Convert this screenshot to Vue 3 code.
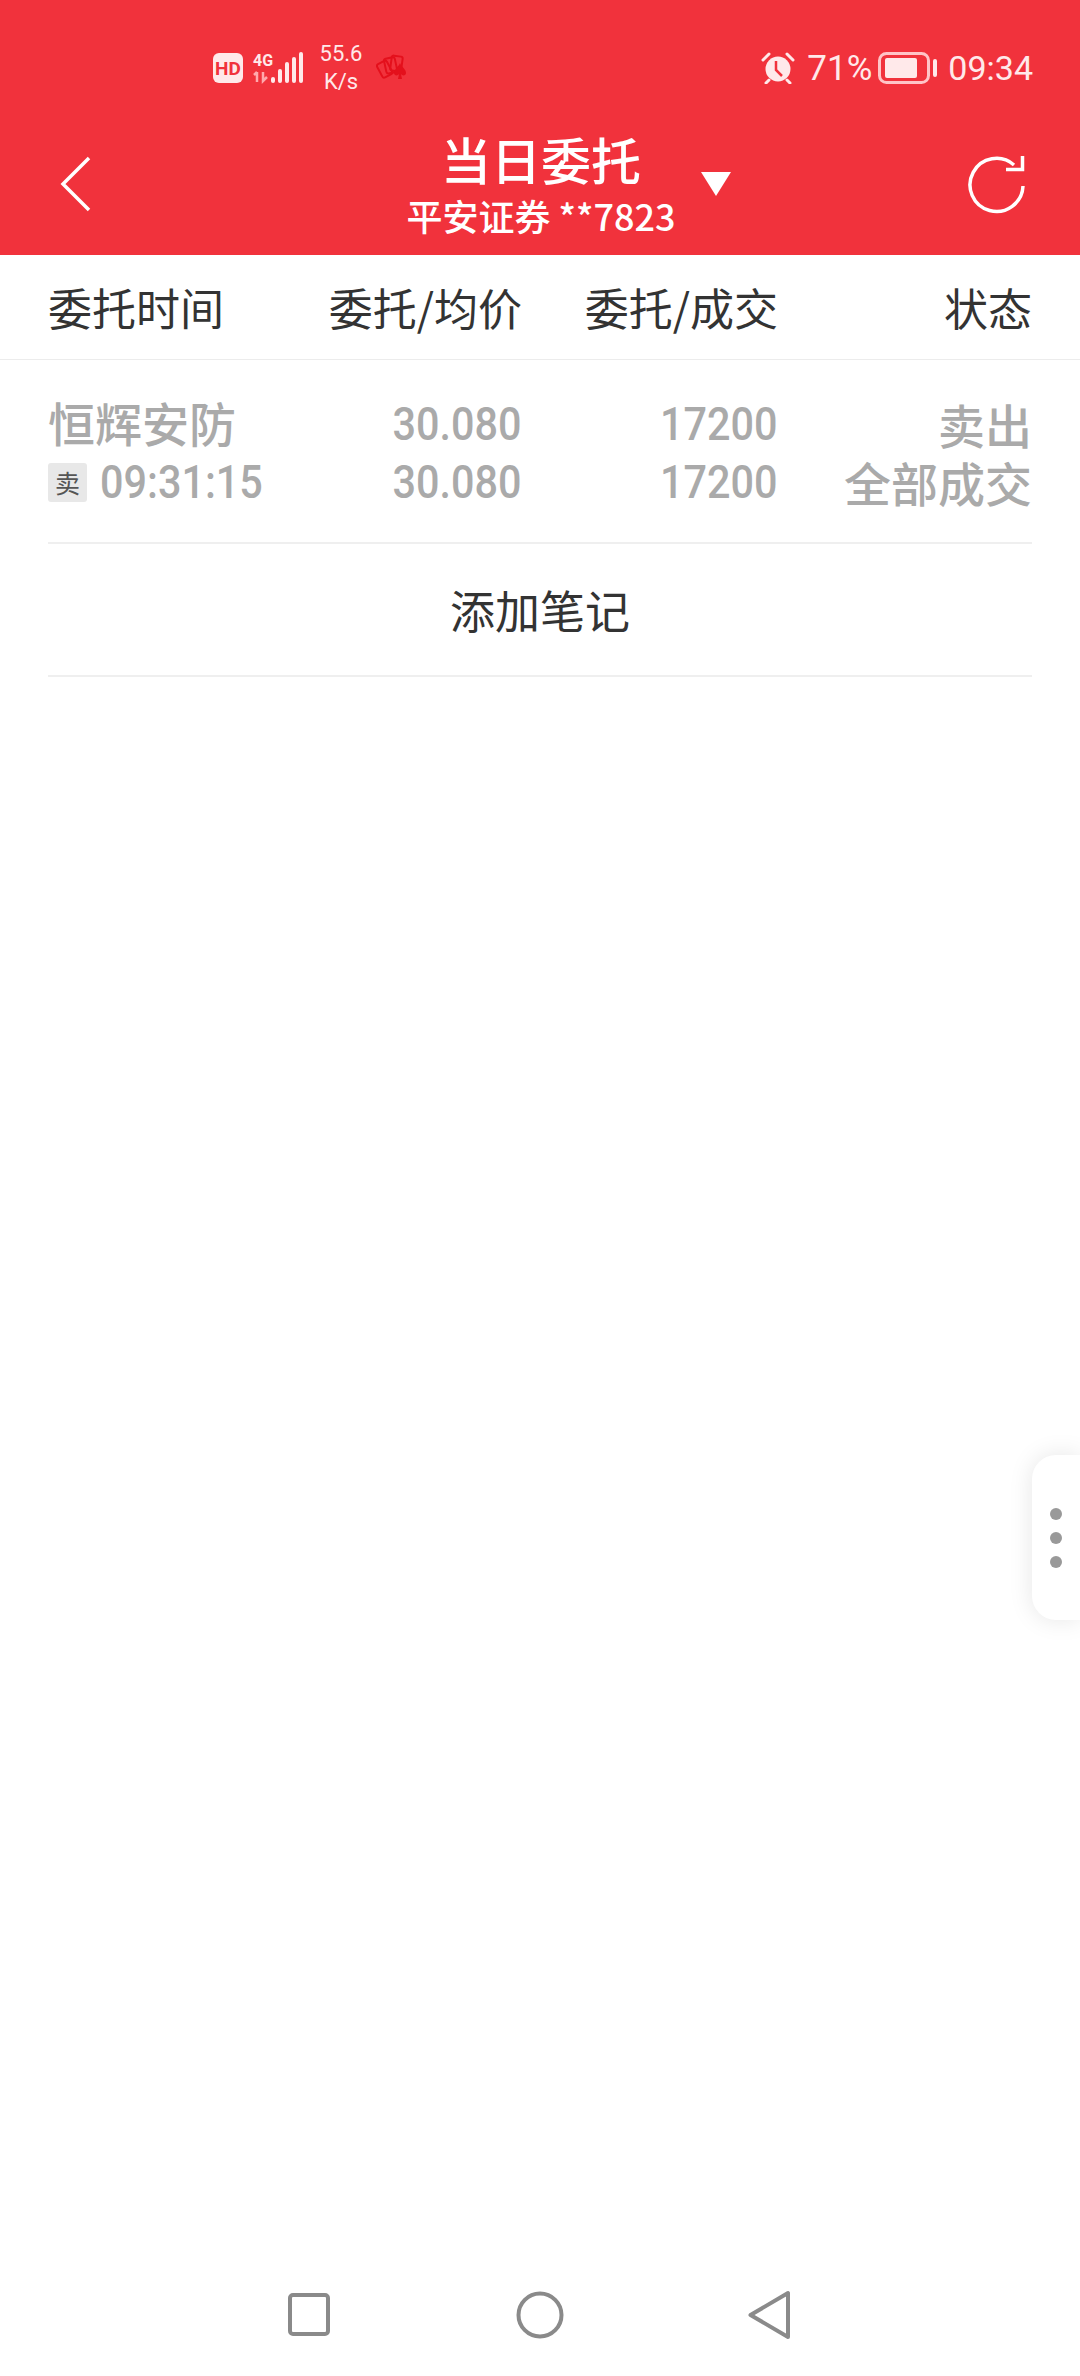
<script setup>
const headers = ['委托时间', '委托/均价', '委托/成交', '状态']
</script>

<template>
  <div class="page">
    <header class="red">
      <div class="status">
        <svg class="net" width="90" height="32" viewBox="0 0 90 32">
          <rect x="0" y="1" width="30" height="30" rx="6" fill="#ffe9ea" />
          <text x="15" y="22.500" text-anchor="middle" class="hd">HD</text>
          <text x="40" y="14" class="fourg">4G</text>
          <path d="M44 20v10M41 23l3-3M50 20v9l4-4" stroke="#ffa9ad" stroke-width="2.500" fill="none" />
          <g fill="#ffe9ea">
            <rect x="58" y="25" width="4" height="6" rx="2" />
            <rect x="65" y="17" width="4" height="14" rx="2" />
            <rect x="72" y="10" width="4" height="21" rx="2" />
            <rect x="79" y="5" width="4" height="26" rx="2" />
            <rect x="86" y="0" width="4" height="31" rx="2" />
          </g>
        </svg>
        <div class="speed"><span>55.6</span><span>K/s</span></div>
        <svg class="cards" width="32" height="28" viewBox="0 0 32 28">
          <g fill="none" stroke="#e4101c" stroke-width="2">
            <rect x="3" y="8" width="11" height="15" rx="2" transform="rotate(-28 8 15)" />
            <rect x="9" y="4" width="11" height="15" rx="2" transform="rotate(-12 14 11)" />
            <rect x="15" y="2" width="11" height="15" rx="2" transform="rotate(8 20 9)" />
          </g>
          <path d="M24 9 C25.500 13 30 15 30 19 C30 22 26 22 25 20 L26 25 H22 L23 20 C22 22 18 22 18 19 C18 15 22.500 13 24 9Z" fill="#e4101c" />
        </svg>
        <div class="status-right">
          <svg class="alarm" width="34" height="32" viewBox="0 0 34 32">
            <circle cx="17" cy="17" r="12.500" fill="#ffe9ea" />
            <path d="M15 9v9l6 6" stroke="#f1323c" stroke-width="2.500" fill="none" />
            <path d="M2 8L8 2M26 2l6 6M8 28l-3 3M26 28l3 3" stroke="#ffe9ea" stroke-width="3" stroke-linecap="round" />
          </svg>
          <span class="pct">71%</span>
          <svg class="batt" width="60" height="32" viewBox="0 0 60 32">
            <rect x="1.500" y="1.500" width="49" height="29" rx="7" fill="none" stroke="#ffc4c7" stroke-width="3" />
            <rect x="7" y="6" width="32" height="20" rx="2" fill="#ffe9ea" />
            <rect x="55" y="7" width="4" height="18" rx="2" fill="#ffe9ea" />
          </svg>
          <span class="clock">09:34</span>
        </div>
      </div>
      <div class="titlebar">
        <svg class="back" width="32" height="56" viewBox="0 0 32 56">
          <path d="M29 2 L3 28 L29 54" fill="none" stroke="#fff" stroke-width="3.500" />
        </svg>
        <div class="title">
          <div class="t1">当日委托</div>
          <div class="t2">平安证券 **7823</div>
          <svg class="caret" width="32" height="26" viewBox="0 0 32 26"><path d="M1 1H31L16 25Z" fill="#fff" /></svg>
        </div>
        <svg class="refresh" width="58" height="60" viewBox="0 0 58 60">
          <path d="M46 10 A26.500 26.500 0 1 0 55 31" fill="none" stroke="#fff" stroke-width="3.500" />
          <path d="M38 14.500 H54.500 V1" fill="none" stroke="#fff" stroke-width="3.500" />
        </svg>
      </div>
    </header>

    <div class="thead">
      <div v-for="h in headers" :key="h" class="th">{{ h }}</div>
    </div>

    <main class="body">
      <div class="row">
        <div class="c1">
          <div class="name">恒辉安防</div>
          <div class="timeline"><span class="tag">卖</span><span class="num time">09:31:15</span></div>
        </div>
        <div class="cell"><span class="num">30.080</span><span class="num">30.080</span></div>
        <div class="cell"><span class="num">17200</span><span class="num">17200</span></div>
        <div class="cell status-cell"><span>卖出</span><span>全部成交</span></div>
      </div>
      <div class="note">添加笔记</div>
    </main>

    <div class="handle"><i></i><i></i><i></i></div>

    <nav class="nav">
      <svg width="48" height="48" viewBox="0 0 48 48"><rect x="5" y="5" width="38" height="39" rx="3" fill="none" stroke="#8a8a8a" stroke-width="4" /></svg>
      <svg width="48" height="50" viewBox="0 0 48 50"><circle cx="24" cy="25" r="21.500" fill="none" stroke="#8a8a8a" stroke-width="4" /></svg>
      <svg width="44" height="50" viewBox="0 0 44 50"><path d="M3.500 25 L41 3 V47 Z" fill="none" stroke="#8a8a8a" stroke-width="4" stroke-linejoin="round" /></svg>
    </nav>
  </div>
</template>

<style>
html, body { margin: 0; background: #fff; }
</style>

<style scoped>
.page {
  position: relative;
  width: 1080px;
  height: 2376px;
  display: flex;
  flex-direction: column;
  background: #fff;
  overflow: hidden;
  font-family: "Noto Sans CJK SC", Roboto, sans-serif;
}
.red { background: #f1323c; color: #fff; }
.status {
  height: 56px;
  padding: 40px 47px 9px 213px;
  display: flex;
  align-items: center;
  color: #ffe9ea;
  font-family: Roboto, sans-serif;
}
.net { overflow: visible; }
.hd { font: 700 19px Roboto, sans-serif; fill: #f1323c; }
.fourg { font: 700 16px Roboto, sans-serif; fill: #ffe9ea; }
.speed {
  display: flex;
  flex-direction: column;
  align-items: center;
  margin-left: 15px;
  font-size: 22px;
  line-height: 28px;
  width: 46px;
}
.cards { margin-left: 12px; }
.status-right { margin-left: auto; display: flex; align-items: center; }
.alarm { margin-right: 2px; }
.pct { font-size: 35px; margin-left: 10px; }
.batt { margin-left: 6px; }
.clock { font-size: 34px; margin-left: 10px; }
.titlebar {
  height: 150px;
  padding: 0 54px 0 60px;
  display: grid;
  grid-template-columns: 1fr auto 1fr;
  align-items: center;
  box-sizing: border-box;
}
.back { margin-top: 8px; }
.title { position: relative; text-align: center; align-self: start; margin-top: 22px; margin-left: -4px; }
.t1 { font-size: 50px; font-weight: 500; line-height: 62px; }
.t2 { font-size: 36px; font-weight: 500; line-height: 52px; white-space: nowrap; }
.caret { position: absolute; left: calc(100% + 24px); top: 44px; }
.refresh { justify-self: end; margin-top: 10px; }
.thead, .row {
  display: grid;
  grid-template-columns: 232px 242px 256px 254px;
  margin: 0 48px;
}
.thead {
  margin: 0;
  padding: 0 48px;
  height: 104px;
  align-items: center;
  border-bottom: 1px solid #ececec;
  font-size: 44px;
  color: #333;
}
.th { text-align: right; }
.th:first-child { text-align: left; }
.body { flex: 1; }
.row {
  height: 184px;
  box-sizing: border-box;
  border-bottom: 2px solid #efefef;
  padding-top: 33px;
  color: #aaa;
  font-size: 47px;
  font-weight: 500;
  line-height: 58px;
}
.name { font-size: 47px; white-space: nowrap; }
.timeline { display: flex; align-items: center; margin-top: 2px; }
.tag {
  flex: none;
  width: 39px;
  height: 39px;
  border-radius: 3px;
  background: #e8e8e8;
  color: #555;
  font-size: 25px;
  font-weight: 400;
  line-height: 39px;
  text-align: center;
}
.num {
  display: inline-block;
  font-family: Roboto, sans-serif;
  font-size: 47px;
  font-weight: 500;
  transform: scaleX(.88);
  transform-origin: right center;
}
.time { margin-left: 13px; transform-origin: left center; }
.cell { display: flex; flex-direction: column; align-items: flex-end; padding-top: 2px; }
.note {
  margin: 0 48px;
  height: 133px;
  box-sizing: border-box;
  border-bottom: 2px solid #efefef;
  display: flex;
  align-items: center;
  justify-content: center;
  font-size: 45px;
  color: #333;
}
.handle {
  position: absolute;
  left: 1032px;
  top: 1455px;
  width: 48px;
  height: 165px;
  box-sizing: border-box;
  background: #fff;
  border-radius: 24px 0 0 24px;
  box-shadow: 0 0 24px rgba(0, 0, 0, .1);
  display: flex;
  flex-direction: column;
  align-items: center;
  justify-content: center;
  gap: 12px;
}
.handle i { width: 12px; height: 12px; border-radius: 50%; background: #999; }
.nav {
  height: 110px;
  box-sizing: border-box;
  display: grid;
  grid-template-columns: 48px 48px 44px;
  justify-content: start;
  column-gap: 183px;
  padding: 24px 0 0 285px;
  align-items: start;
}
</style>
